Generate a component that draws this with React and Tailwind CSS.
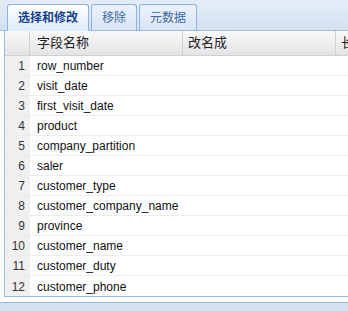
import React from 'react';

const fields = [
  'row_number',
  'visit_date',
  'first_visit_date',
  'product',
  'company_partition',
  'saler',
  'customer_type',
  'customer_company_name',
  'province',
  'customer_name',
  'customer_duty',
  'customer_phone',
];

const tabs = [
  { label: '选择和修改', active: true },
  { label: '移除' },
  { label: '元数据' },
];

const App = () => {
  return (
    <div
      className="w-[348px] h-[311px] overflow-hidden bg-white flex flex-col"
      style={{ fontFamily: '"Liberation Sans", "Noto Sans CJK SC", sans-serif' }}
    >
      {/* TAB STRIP */}
      <div className="h-[31px] shrink-0 flex items-end pl-[7px] gap-[2px] bg-gradient-to-b from-[#e4ecf7] to-[#d3e1f1] border-b border-[#99bbe8]">
        {tabs.map((t) => (
          <div
            key={t.label}
            className={`h-[27px] -mb-px px-[10px] flex items-center rounded-t-[3px] border border-[#8db2e3] text-[12px] ${
              t.active
                ? 'bg-gradient-to-b from-[#ffffff] to-[#deecfd] border-b-[#deecfd] font-bold text-[#15428b]'
                : 'bg-gradient-to-b from-[#ecf2fb] to-[#d8e5f5] text-[#416aa3] border-b-[#99bbe8]'
            }`}
          >
            {t.label}
          </div>
        ))}
      </div>

      {/* GRID */}
      <div className="ml-[4px] w-[400px] border-l border-b border-[#99bbe8] shrink-0">
        <div className="flex h-[25px] bg-gradient-to-b from-[#f9f9f9] to-[#e3e4e6] border-b border-[#d0d0d0] text-[13px] text-[#222]">
          <div className="w-[25px] border-r border-[#d0d0d0]" />
          <div className="w-[153px] border-r border-[#d0d0d0] pl-[7px] flex items-center">字段名称</div>
          <div className="w-[153px] border-r border-[#d0d0d0] pl-[5px] flex items-center">改名成</div>
          <div className="flex-1 pl-[5px] flex items-center">长度</div>
        </div>
        {fields.map((f, i) => (
          <div key={f} className="flex h-[20px] border-b border-[#ededed] last:border-b-0 text-[12px] text-[#111]">
            <div className="w-[25px] bg-[#f0f0f0] pr-[5px] pt-px flex items-center justify-end text-[#333]">{i + 1}</div>
            <div className="w-[153px] pl-[7px] pt-px flex items-center">{f}</div>
            <div className="w-[153px]" />
            <div className="flex-1" />
          </div>
        ))}
      </div>

      <div className="h-[5px] shrink-0" />
      <div className="flex-1 bg-[#d3e1f1] border-t border-[#99bbe8]" />
    </div>
  );
};

export default App;
